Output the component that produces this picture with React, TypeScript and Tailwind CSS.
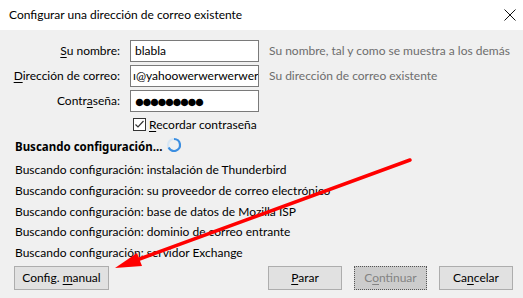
import React from 'react';

// Thunderbird "existing mail account" dialog, mid-search, with a red
// annotation arrow pointing at the manual config button.

function Key({ children }: { children: React.ReactNode }) {
  return <span className="underline underline-offset-2">{children}</span>;
}

function Field({ label, children, hint }: { label: React.ReactNode; children: React.ReactNode; hint?: string }) {
  return (
    <div className="flex h-[22px] items-center">
      <div className="w-[121px] shrink-0 whitespace-nowrap pr-[1px] text-right">{label}</div>
      <div className="ml-[9px] flex h-[22px] w-[129px] shrink-0 items-center overflow-hidden border border-[#7a7a7a] bg-white px-[4px]">
        {children}
      </div>
      {hint && <div className="ml-[10px] whitespace-nowrap text-[#6d6d6d]">{hint}</div>}
    </div>
  );
}

function Button({ children, className = '' }: { children: React.ReactNode; className?: string }) {
  return (
    <div className={`flex h-[24px] shrink-0 items-center justify-center border border-[#adadad] bg-[#e1e1e1] ${className}`}>
      <span>{children}</span>
    </div>
  );
}

const STEPS = [
  'instalación de Thunderbird',
  'su proveedor de correo electrónico',
  'base de datos de Mozilla ISP',
  'dominio de correo entrante',
  'servidor Exchange',
];

export default function App() {
  return (
    <div className="relative h-[298px] w-[523px] overflow-hidden bg-[#f0f0f0] font-['Lato','Noto_Sans',sans-serif] text-[12px] text-black">
      <div className="flex h-[30px] items-center justify-between bg-white pl-[9px] pr-[6px]">
        <span>Configurar una dirección de correo existente</span>
        <svg width="12" height="12" viewBox="0 0 12 12" className="mr-[1px]">
          <path d="M0.5 0.5 L11.5 11.5 M11.5 0.5 L0.5 11.5" stroke="#111" strokeWidth="1" />
        </svg>
      </div>

      <div className="flex flex-col gap-[3px] pt-[10px]">
        <Field label={<><Key>S</Key>u nombre:</>} hint="Su nombre, tal y como se muestra a los demás">
          blabla
        </Field>
        <Field label={<><Key>D</Key>irección de correo:</>} hint="Su dirección de correo existente">
          <span className="-ml-[2px] whitespace-nowrap">ı@yahoowerwerwerwer</span>
        </Field>
        <Field label={<>Contr<Key>a</Key>seña:</>}>
          <span className="text-[15px] leading-none tracking-[-1.5px]">●●●●●●●●●</span>
        </Field>
      </div>

      <div className="mt-[6px] flex h-[13px] items-center pl-[133px]">
        <div className="flex h-[13px] w-[13px] items-center justify-center border border-[#333] bg-white">
          <svg width="11" height="11" viewBox="0 0 11 11">
            <path d="M1.5 5.5 L4 8 L9.5 2" stroke="#333" strokeWidth="1.2" fill="none" />
          </svg>
        </div>
        <span className="ml-[3px]"><Key>R</Key>ecordar contraseña</span>
      </div>

      <div className="mt-[8px] flex h-[16px] items-center pl-[15px]">
        <span className="font-['Noto_Sans',sans-serif] text-[11.5px] font-bold">Buscando configuración...</span>
        <svg width="16" height="16" viewBox="0 0 16 16" className="ml-[4px] -mt-[4px]">
          <circle cx="8" cy="8" r="6" stroke="#d6e6f5" strokeWidth="2.2" fill="none" />
          <path d="M8 2 A6 6 0 1 1 2.6 10.6" stroke="#3c8ee0" strokeWidth="2.2" fill="none" />
        </svg>
      </div>

      <div className="mt-[5px] flex flex-col pl-[15px] leading-[20.75px]">
        {STEPS.map((s) => (
          <div key={s}>Buscando configuración: {s}</div>
        ))}
      </div>

      <div className="absolute bottom-[8px] left-[14px] right-[10px] flex items-center">
        <Button className="w-[95px]">
          Config. <Key>m</Key>anual
        </Button>
        <div className="flex-1" />
        <Button className="w-[74px]">
          <Key>P</Key>arar
        </Button>
        <div className="ml-[12px] flex h-[24px] w-[73px] shrink-0 items-center justify-center border border-dotted border-[#555] bg-[#cccccc] text-[#838383]">
          <span>C<Key>o</Key>ntinuar</span>
        </div>
        <Button className="ml-[12px] w-[74px]">
          Ca<Key>n</Key>celar
        </Button>
      </div>

      <svg className="pointer-events-none absolute left-0 top-0" width="523" height="298" viewBox="0 0 523 298">
        <line x1="410" y1="160" x2="134" y2="261" stroke="#ff0000" strokeWidth="3.5" strokeLinecap="round" />
        <polygon points="115,268 137,253 142,266" fill="#ff0000" />
      </svg>
    </div>
  );
}
